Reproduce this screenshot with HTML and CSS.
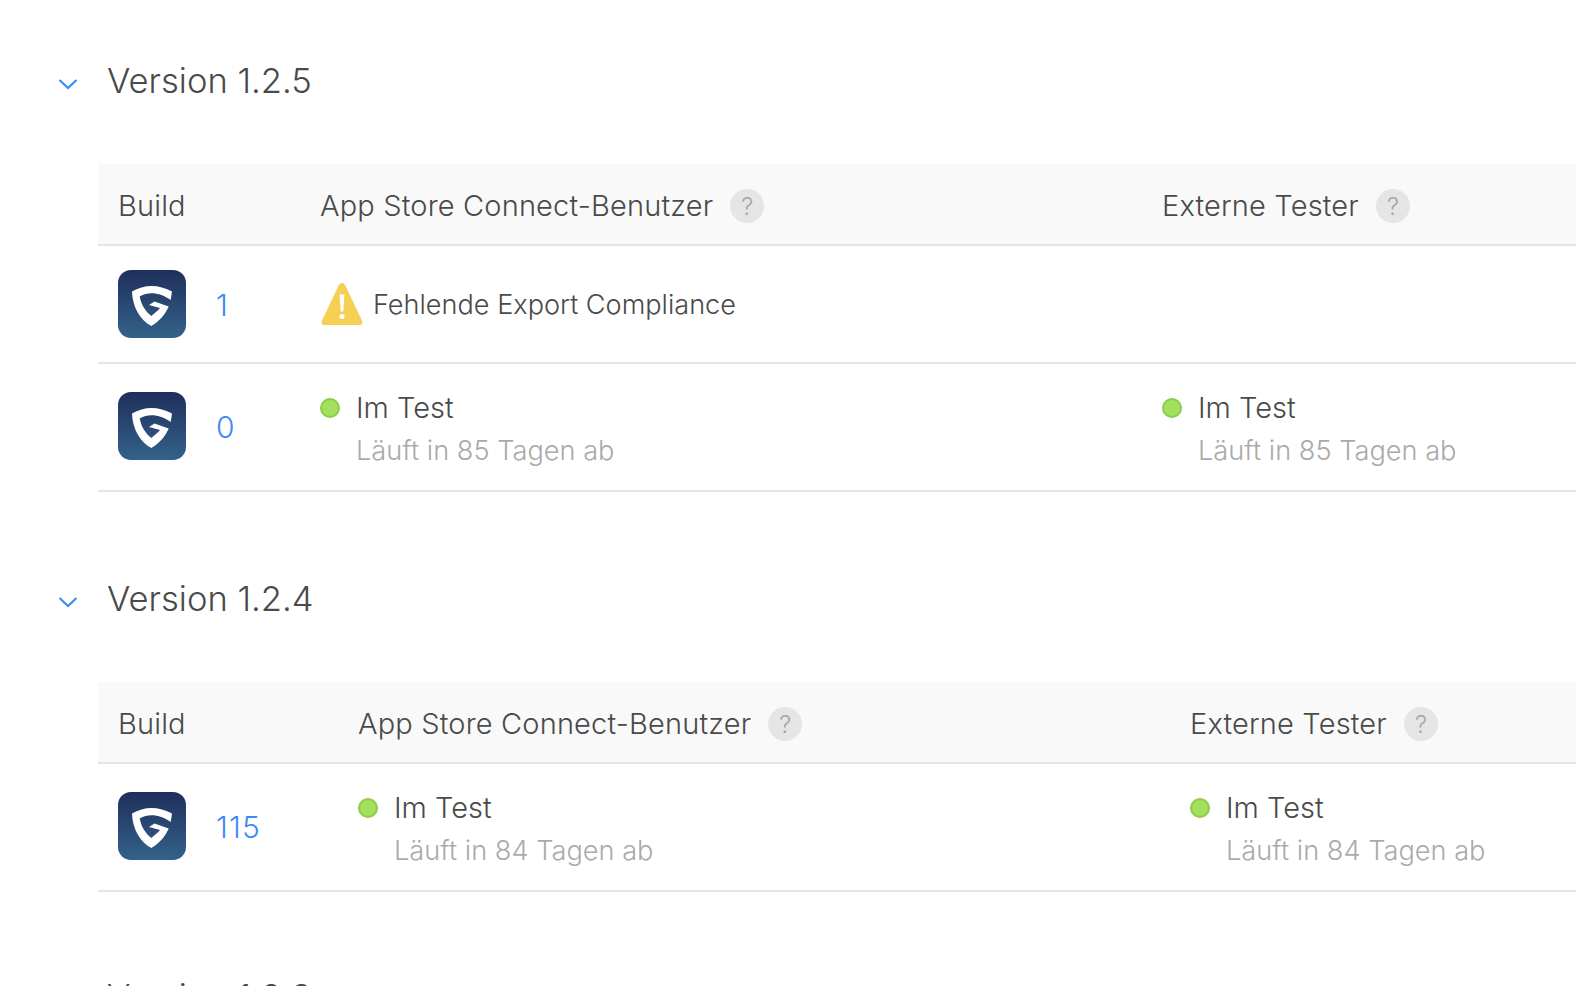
FILE: index.html
```html
<!DOCTYPE html>
<html lang="de">
<head>
<meta charset="utf-8">
<title>Builds</title>
<link rel="stylesheet" href="styles.css">
</head>
<body>
<svg class="defs" width="0" height="0" aria-hidden="true">
  <defs>
    <linearGradient id="tile" x1="0" y1="0" x2="0" y2="1">
      <stop offset="0" stop-color="#1f2f5c"/>
      <stop offset="1" stop-color="#336289"/>
    </linearGradient>
    <symbol id="logo" viewBox="0 0 68 68">
      <rect width="68" height="68" rx="13" fill="url(#tile)"/>
      <path d="M14 21.500C20 18 27 16 33.500 16C40 16 48 18 54 21.500L52.700 30C47 26 40 23.300 33.500 23.300C29.500 23.300 25.500 24.500 21.700 26.500C23 34 27 41 33.300 46C37 43 40 40.500 42 38L31 35L36.500 31.500L50.700 36.500C47 45 41 51.500 33.300 56C22 50 14.500 37 14 21.500Z" fill="#fff"/>
    </symbol>
    <symbol id="chev" viewBox="0 0 20 12">
      <path d="M1.500 2L10 10L18.500 2" fill="none" stroke="#3b8bf5" stroke-width="2.200"/>
    </symbol>
  </defs>
</svg>
<main class="page">
  <section class="version">
    <h2 class="version-title"><svg class="chevron"><use href="#chev"/></svg>Version 1.2.5</h2>
    <div class="table narrow">
      <div class="row head">
        <div>Build</div>
        <div class="head-cell">App Store Connect-Benutzer <span class="help">?</span></div>
        <div class="head-cell">Externe Tester <span class="help">?</span></div>
      </div>
      <div class="row missing">
        <div class="build"><svg class="logo"><use href="#logo"/></svg><a class="num">1</a></div>
        <div class="warn">
          <svg class="warn-icon" viewBox="0 0 42 42"><path d="M21 0C22.500 0 23.500 1 24.500 2.800L41.200 38C42 40 41 42 39 42H3C1 42 0 40 .8 38L17.500 2.800C18.500 1 19.500 0 21 0Z" fill="#f5d055"/><path d="M18.600 11.500H23.400L22.200 28.500H19.800Z" fill="#fff"/><circle cx="21" cy="33.500" r="2.500" fill="#fff"/></svg>
          Fehlende Export Compliance
        </div>
        <div></div>
      </div>
      <div class="row">
        <div class="build"><svg class="logo"><use href="#logo"/></svg><a class="num">0</a></div>
        <div class="status"><span class="dot"></span><div><div class="state">Im Test</div><div class="expiry">Läuft in 85 Tagen ab</div></div></div>
        <div class="status"><span class="dot"></span><div><div class="state">Im Test</div><div class="expiry">Läuft in 85 Tagen ab</div></div></div>
      </div>
    </div>
  </section>
  <section class="version">
    <h2 class="version-title"><svg class="chevron"><use href="#chev"/></svg>Version 1.2.4</h2>
    <div class="table wide">
      <div class="row head">
        <div>Build</div>
        <div class="head-cell">App Store Connect-Benutzer <span class="help">?</span></div>
        <div class="head-cell">Externe Tester <span class="help">?</span></div>
      </div>
      <div class="row">
        <div class="build"><svg class="logo"><use href="#logo"/></svg><a class="num">115</a></div>
        <div class="status"><span class="dot"></span><div><div class="state">Im Test</div><div class="expiry">Läuft in 84 Tagen ab</div></div></div>
        <div class="status"><span class="dot"></span><div><div class="state">Im Test</div><div class="expiry">Läuft in 84 Tagen ab</div></div></div>
      </div>
    </div>
  </section>
  <section class="version">
    <h2 class="version-title"><svg class="chevron"><use href="#chev"/></svg>Version 1.2.3</h2>
  </section>
</main>
</body>
</html>
```
FILE: styles.css
```css
html, body { margin: 0; height: 100%; overflow: hidden; background: #fff; }
body { font-family: Inter, "Liberation Sans", sans-serif; font-weight: 300; color: #444; }
.defs { display: block; height: 0; }
.page { padding: 58px 0 0 58px; }
.version { margin-bottom: 84px; }
.version:nth-child(2) { margin-bottom: 82px; }
.version-title { display: flex; align-items: center; margin: 0 0 62px; font-size: 34.6px; font-weight: 300; line-height: 44px; color: #4a4a4a; }
.chevron { width: 20px; height: 12px; margin-right: 29px; margin-top: 7px; }
.table { margin-left: 40px; }
.row { display: grid; align-items: center; border-bottom: 2px solid #e5e5e5; padding-left: 20px; height: 128px; box-sizing: border-box; }
.narrow .row { grid-template-columns: 202px 842px 1fr; }
.wide .row { grid-template-columns: 240px 832px 1fr; }
.row.missing { height: 118px; }
.row.head { height: 82px; padding-top: 2px; background: #f9f9f9; font-size: 29px; letter-spacing: .16px; color: #4a4a4a; }
.head-cell { display: flex; align-items: center; gap: 17px; }
.help { display: inline-flex; align-items: center; justify-content: center; width: 34px; height: 34px; margin-top: 2px; border-radius: 50%; background: #e5e5e5; color: #a5a5a5; font-size: 24px; letter-spacing: 0; }
.build { display: flex; align-items: center; }
.row:not(.missing) .build { padding-bottom: 2px; }
.logo { width: 68px; height: 68px; margin-right: 30px; }
.num { padding-top: 2px; font-size: 30px; letter-spacing: 1.2px; color: #3b8bf5; }
.warn { display: flex; align-items: center; gap: 10px; margin-left: 1px; font-size: 27.1px; color: #4a4a4a; white-space: nowrap; }
.warn-icon { width: 42px; height: 42px; }
.status { display: flex; align-items: flex-start; gap: 16px; padding-top: 6px; }
.dot { width: 16px; height: 16px; margin-top: 10px; border: 2px solid #8ccb4c; border-radius: 50%; background: #a3e05c; flex: none; }
.state { font-size: 29px; line-height: 40px; color: #4a4a4a; }
.expiry { font-size: 27.2px; line-height: 45px; color: #aaa; }
```
